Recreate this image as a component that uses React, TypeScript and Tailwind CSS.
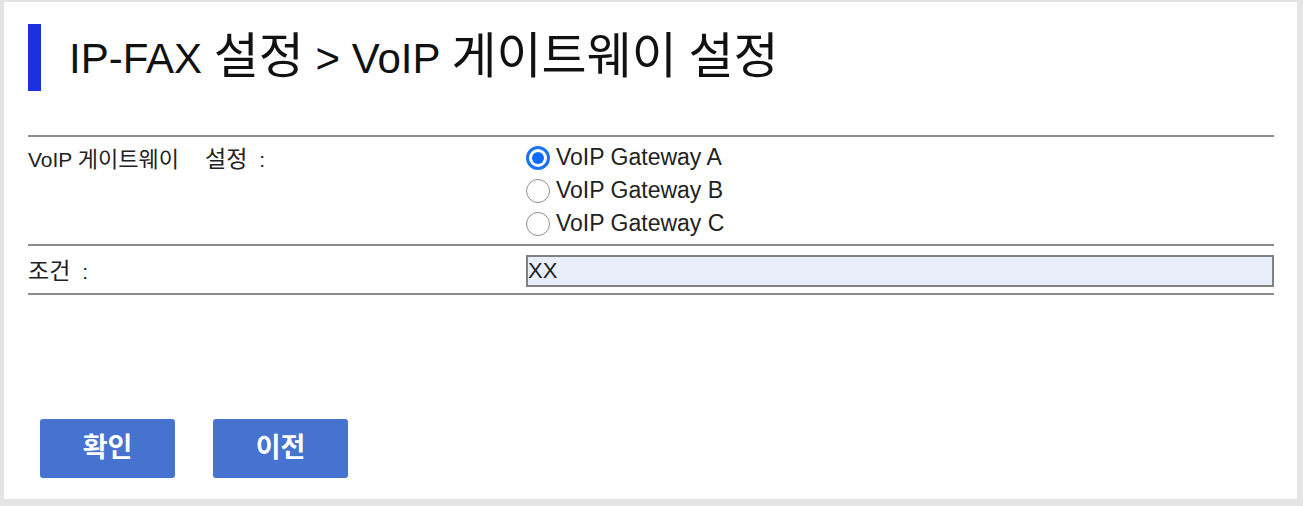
const font = {
  fontFamily: '"Liberation Sans", "Noto Sans CJK KR", sans-serif',
};

const options = ["VoIP Gateway A", "VoIP Gateway B", "VoIP Gateway C"];

function Radio({ checked }: { checked: boolean }) {
  if (checked) {
    return (
      <span className="flex h-[24px] w-[24px] shrink-0 items-center justify-center rounded-full border-[3px] border-[#1a73f0] bg-white">
        <span className="h-[12px] w-[12px] rounded-full bg-[#0a6cff]" />
      </span>
    );
  }
  return (
    <span className="h-[24px] w-[24px] shrink-0 rounded-full border border-[#8f8f8f] bg-white" />
  );
}

export default function App() {
  return (
    <div className="h-[506px] w-full bg-[#e4e4e4] pl-[4px] pt-[2px]" style={font}>
      <div className="flex h-[497px] w-[1293px] flex-col bg-white pl-6 pt-[22px]">
        {/* header */}
        <div className="flex h-[67px] items-center">
          <div className="h-full w-[13px] bg-[#1b31e0]" />
          {/* hangul runs are set a bit larger than the latin text */}
          <h1 className="ml-[28px] text-[42px] leading-[50px] text-[#111]">
            IP-FAX <span className="text-[49px]">설정</span> &gt; VoIP{" "}
            <span className="text-[49px]">게이트웨이</span>{" "}
            <span className="text-[49px]">설정</span>
          </h1>
        </div>

        {/* settings table */}
        <div className="mt-[44px] w-[1246px] text-[#222]">
          <div className="grid grid-cols-[498px_1fr] border-t-2 border-[#8c8c8c]">
            <div className="pt-[10px] text-[21px] leading-[24px]">
              VoIP <span className="text-[22px]">게이트웨이</span>
              <span className="ml-[26px] text-[23px]">설정</span>
              <span className="ml-[12px]">:</span>
            </div>
            <div className="flex flex-col pt-[4px] pb-[4px]">
              {options.map((o, i) => (
                <label key={o} className="flex h-[33px] items-center">
                  <Radio checked={i === 0} />
                  <span className="ml-[6px] text-[23px] leading-none">{o}</span>
                </label>
              ))}
            </div>
          </div>
          <div className="grid grid-cols-[498px_1fr] items-center border-y-2 border-[#8c8c8c] pt-[9px] pb-[6px]">
            <div className="text-[21px] leading-[24px]">
              <span className="text-[23px]">조건</span>
              <span className="ml-[12px]">:</span>
            </div>
            <div className="flex h-[32px] items-center border-2 border-[#808080] bg-[#e8effb] text-[22px] leading-none">
              XX
            </div>
          </div>
        </div>

        {/* actions */}
        <div className="mt-[124px] ml-[12px] flex gap-[38px]">
          <button className="h-[59px] w-[135px] rounded-[3px] bg-[#4672d0] text-[27px] font-bold text-white">
            확인
          </button>
          <button className="h-[59px] w-[135px] rounded-[3px] bg-[#4672d0] text-[27px] font-bold text-white">
            이전
          </button>
        </div>
      </div>
    </div>
  );
}
